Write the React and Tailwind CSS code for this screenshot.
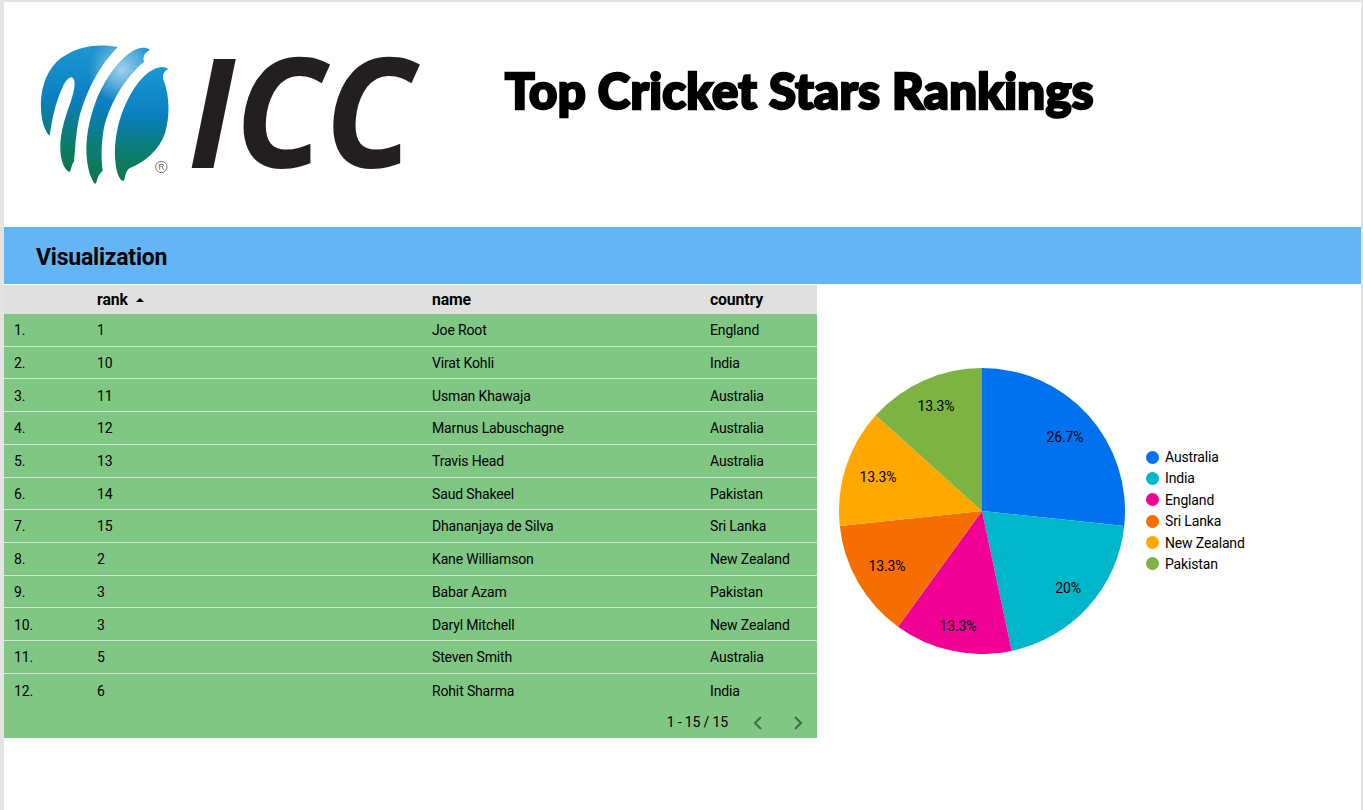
const rows = [
  ["1.", "1", "Joe Root", "England"],
  ["2.", "10", "Virat Kohli", "India"],
  ["3.", "11", "Usman Khawaja", "Australia"],
  ["4.", "12", "Marnus Labuschagne", "Australia"],
  ["5.", "13", "Travis Head", "Australia"],
  ["6.", "14", "Saud Shakeel", "Pakistan"],
  ["7.", "15", "Dhananjaya de Silva", "Sri Lanka"],
  ["8.", "2", "Kane Williamson", "New Zealand"],
  ["9.", "3", "Babar Azam", "Pakistan"],
  ["10.", "3", "Daryl Mitchell", "New Zealand"],
  ["11.", "5", "Steven Smith", "Australia"],
  ["12.", "6", "Rohit Sharma", "India"],
];

const slices = [
  { name: "Australia", value: 26.67, label: "26.7%", color: "#0072f0", bg: "bg-[#0072f0]", lx: 1065, ly: 437 },
  { name: "India", value: 20, label: "20%", color: "#00b6cb", bg: "bg-[#00b6cb]", lx: 1068, ly: 588 },
  { name: "England", value: 13.33, label: "13.3%", color: "#f10096", bg: "bg-[#f10096]", lx: 958, ly: 626 },
  { name: "Sri Lanka", value: 13.33, label: "13.3%", color: "#f66d00", bg: "bg-[#f66d00]", lx: 887, ly: 566 },
  { name: "New Zealand", value: 13.33, label: "13.3%", color: "#ffa800", bg: "bg-[#ffa800]", lx: 878, ly: 477 },
  { name: "Pakistan", value: 13.34, label: "13.3%", color: "#7cb342", bg: "bg-[#7cb342]", lx: 936, ly: 406 },
];

const leftSeam =
  "M353 141 C300 130 225 135 170 185 C135 220 120 275 123 330 C125 365 135 395 149 407 C154 375 162 325 178 285 C188 258 200 233 214 232 C230 236 224 270 214 300 C196 350 179 400 181 450 C183 485 192 507 208 516 C216 510 212 495 222 485 C226 450 226 410 236 360 C250 300 285 210 353 141 Z";
const midSeam =
  "M450 149 C435 140 415 142 395 155 C350 185 305 250 282 320 C262 380 256 430 261 480 C265 515 275 540 285 552 C293 547 288 530 308 512 C304 480 303 440 310 395 C322 325 370 235 432 185 C426 165 440 155 450 149 Z";

const Logo = () => (
  <svg width="400" height="222" viewBox="0 0 400 222" className="block">
    <defs>
      <linearGradient id="ball" x1="0" y1="0" x2="0" y2="1">
        <stop offset="0" stopColor="#1c98d2" />
        <stop offset="0.42" stopColor="#0a7fc0" />
        <stop offset="0.72" stopColor="#0b7d74" />
        <stop offset="1" stopColor="#0f7549" />
      </linearGradient>
      <radialGradient id="shine" gradientUnits="userSpaceOnUse" cx="365" cy="210" r="100">
        <stop offset="0" stopColor="#ffffff" stopOpacity="0.6" />
        <stop offset="1" stopColor="#ffffff" stopOpacity="0" />
      </radialGradient>
    </defs>
    {/* ball traced from the 3x crop, so it is scaled back down */}
    <g transform="translate(-38 -2) scale(0.3333)">
      <g fill="url(#ball)">
        <path d={leftSeam} />
        <path d={midSeam} />
        <path d="M505 207 C490 196 470 200 442 220 C405 250 372 310 355 375 C343 425 342 470 350 510 C355 530 362 543 371 543 C376 535 375 515 388 505 C435 487 478 450 495 400 C510 350 510 290 490 238 C486 222 495 212 505 207 Z" />
      </g>
      <g fill="url(#shine)">
        <path d={leftSeam} />
        <path d={midSeam} />
      </g>
      <circle cx="484" cy="501" r="17" fill="none" stroke="#777" strokeWidth="3" />
      <text x="484" y="511" textAnchor="middle" fontSize="26" fill="#666" fontFamily="Liberation Sans, sans-serif">R</text>
    </g>
    <text
      x="150"
      y="166"
      fontSize="152"
      fontWeight="700"
      fontStyle="italic"
      fill="#231f20"
      fontFamily="Open Sans, sans-serif"
      textLength="226"
      lengthAdjust="spacingAndGlyphs"
    >
      ICC
    </text>
  </svg>
);

const PieChart = () => {
  const cx = 143;
  const cy = 143;
  const r = 143;
  let angle = 0;
  return (
    <svg width="286" height="286" viewBox="0 0 286 286" className="block shrink-0">
      {slices.map((s) => {
        const start = angle;
        angle += (s.value / 100) * Math.PI * 2;
        const x1 = cx + r * Math.sin(start);
        const y1 = cy - r * Math.cos(start);
        const x2 = cx + r * Math.sin(angle);
        const y2 = cy - r * Math.cos(angle);
        const large = angle - start > Math.PI ? 1 : 0;
        return <path key={s.name} d={`M${cx} ${cy} L${x1} ${y1} A${r} ${r} 0 ${large} 1 ${x2} ${y2} Z`} fill={s.color} />;
      })}
      {slices.map((s) => (
        <text key={s.name} x={s.lx - 839} y={s.ly - 368 + 5} textAnchor="middle" fontSize="14" letterSpacing="-0.15" fill="#000" fontFamily="Roboto, sans-serif">
          {s.label}
        </text>
      ))}
    </svg>
  );
};

export default function App() {
  return (
    <div className="h-[810px] overflow-hidden bg-[#e4e4e4] pt-[2px] pl-1 pr-[2px] font-['Roboto',sans-serif] text-black">
      <div className="h-full bg-white">
        <header className="flex h-[225px] items-start">
          <div className="ml-[34px] w-[467px] shrink-0">
            <Logo />
          </div>
          <h1 className="mt-[53px] w-[600px] text-[49px] leading-[70px] font-black tracking-[0.3px] whitespace-nowrap font-['Lato',sans-serif] [-webkit-text-stroke:2.5px_#000]">
            Top Cricket Stars Rankings
          </h1>
        </header>

        <div className="flex h-[57px] items-center bg-[#64b5f6] pt-[5px] pl-8 text-[23px] font-bold tracking-[-0.22px]">Visualization</div>

        <div className="mt-px flex items-start">
          <div className="w-[813px] shrink-0 text-sm tracking-[-0.15px]">
            <div className="grid h-[29px] grid-cols-[93px_335px_278px_1fr] items-center bg-[#e0e0e0] pt-px text-[15.8px] font-bold">
              <span />
              <span className="flex items-center gap-2">
                rank
                <svg width="8" height="4" viewBox="0 0 8 4"><path d="M0 4 L4 0 L8 4 Z" fill="#000" /></svg>
              </span>
              <span>name</span>
              <span>country</span>
            </div>
            <div className="bg-[#81c784]">
              {rows.map((row, i) => (
                <div
                  key={row[0]}
                  className={`grid h-[32.72px] grid-cols-[93px_335px_278px_1fr] items-center pt-[0.5px] ${i < 11 ? "border-b border-[#d5e6d6]" : ""}`}
                >
                  <span className="pl-[10px]">{row[0]}</span>
                  <span>{row[1]}</span>
                  <span>{row[2]}</span>
                  <span>{row[3]}</span>
                </div>
              ))}
              <div className="flex h-[31px] items-center justify-end">
                <span>1 - 15 / 15</span>
                <svg width="10" height="14" viewBox="0 0 10 14" className="mt-[2px] mr-[30px] ml-[25px]" fill="none" stroke="#44704a" strokeWidth="2.2">
                  <path d="M8 1 L2 7 L8 13" />
                </svg>
                <svg width="10" height="14" viewBox="0 0 10 14" className="mt-[2px] mr-[14px]" fill="none" stroke="#44704a" strokeWidth="2.2">
                  <path d="M2 1 L8 7 L2 13" />
                </svg>
              </div>
            </div>
          </div>

          <div className="mt-[83px] ml-[22px] flex items-center">
            <PieChart />
            <ul className="mb-px ml-[21px] text-sm tracking-[-0.15px]">
              {slices.map((s) => (
                <li key={s.name} className="flex h-[21.4px] items-center gap-[6px]">
                  <span className={`h-[13px] w-[13px] rounded-full ${s.bg}`} />
                  {s.name}
                </li>
              ))}
            </ul>
          </div>
        </div>
      </div>
    </div>
  );
}
